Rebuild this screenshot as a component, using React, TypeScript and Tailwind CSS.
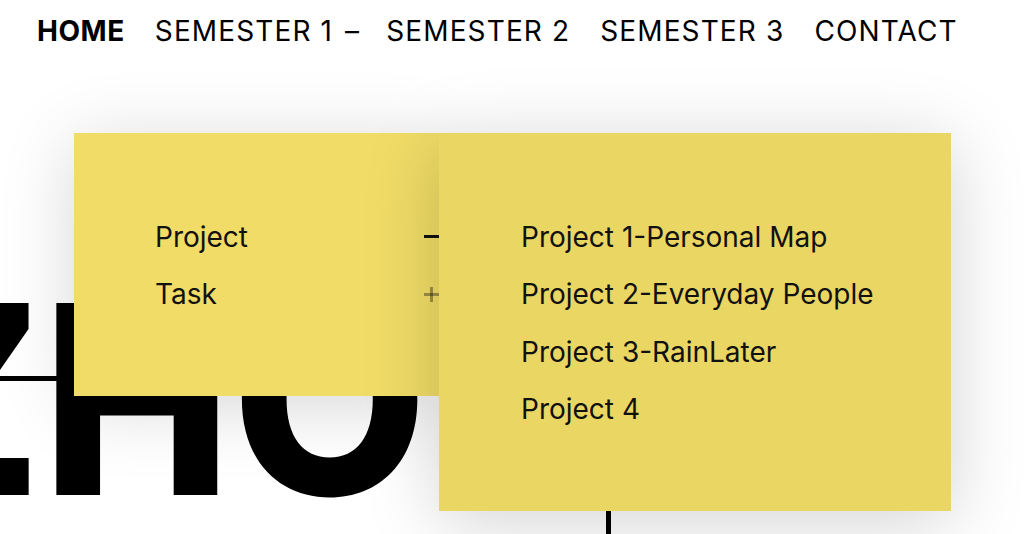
export default function App() {
  const sub = [
    "Project 1-Personal Map",
    "Project 2-Everyday People",
    "Project 3-RainLater",
    "Project 4",
  ];
  return (
    <div className="relative h-[534px] w-[1024px] overflow-hidden bg-white font-['Inter','Noto_Sans',sans-serif] text-black">
      <nav className="flex items-center gap-[30px] pl-[37px] pt-[17px] text-[28px] leading-none tracking-[0.04em]">
        <span className="font-bold tracking-[0.02em]">HOME</span>
        <span>
          SEMESTER 1 <span className="ml-[3px]">–</span>
        </span>
        <span className="-ml-[4px]">SEMESTER 2</span>
        <span>SEMESTER 3</span>
        <span>CONTACT</span>
      </nav>

      <div className="mt-[222px] ml-[-130px] origin-left scale-x-[0.96] whitespace-nowrap text-[264px] font-extrabold leading-none">
        ZHOU
      </div>
      <div className="absolute left-0 top-[376px] h-[5px] w-[611px] bg-black" />
      <div className="absolute left-[606px] top-[376px] h-[200px] w-[5px] bg-black" />

      <div className="absolute left-[74px] top-[133px] flex items-start">
        <div className="w-[365px] bg-[#f0dc66] pt-[75px] pb-[73px] pl-[81px] shadow-[0_10px_70px_rgba(0,0,0,0.16)]">
          <div className="flex h-[57.5px] items-center justify-between text-[28px] text-[#111]">
            <span>Project</span>
            <span className="block h-[3px] w-[15px] bg-[#111]" />
          </div>
          <div className="flex h-[57.5px] items-center justify-between text-[28px] text-[#111]">
            <span>Task</span>
            <span className="relative block h-[15px] w-[15px]">
              <span className="absolute left-0 top-[6px] h-[3px] w-[15px] bg-black/35" />
              <span className="absolute left-[6px] top-0 h-[15px] w-[3px] bg-black/35" />
            </span>
          </div>
        </div>
        <div className="w-[512px] bg-[#e9d663] pt-[75px] pb-[73px] pl-[82px] shadow-[0_10px_70px_rgba(0,0,0,0.18)]">
          {sub.map((s) => (
            <div key={s} className="flex h-[57.5px] items-center text-[28px] text-[#111]">
              {s}
            </div>
          ))}
        </div>
      </div>
    </div>
  );
}
